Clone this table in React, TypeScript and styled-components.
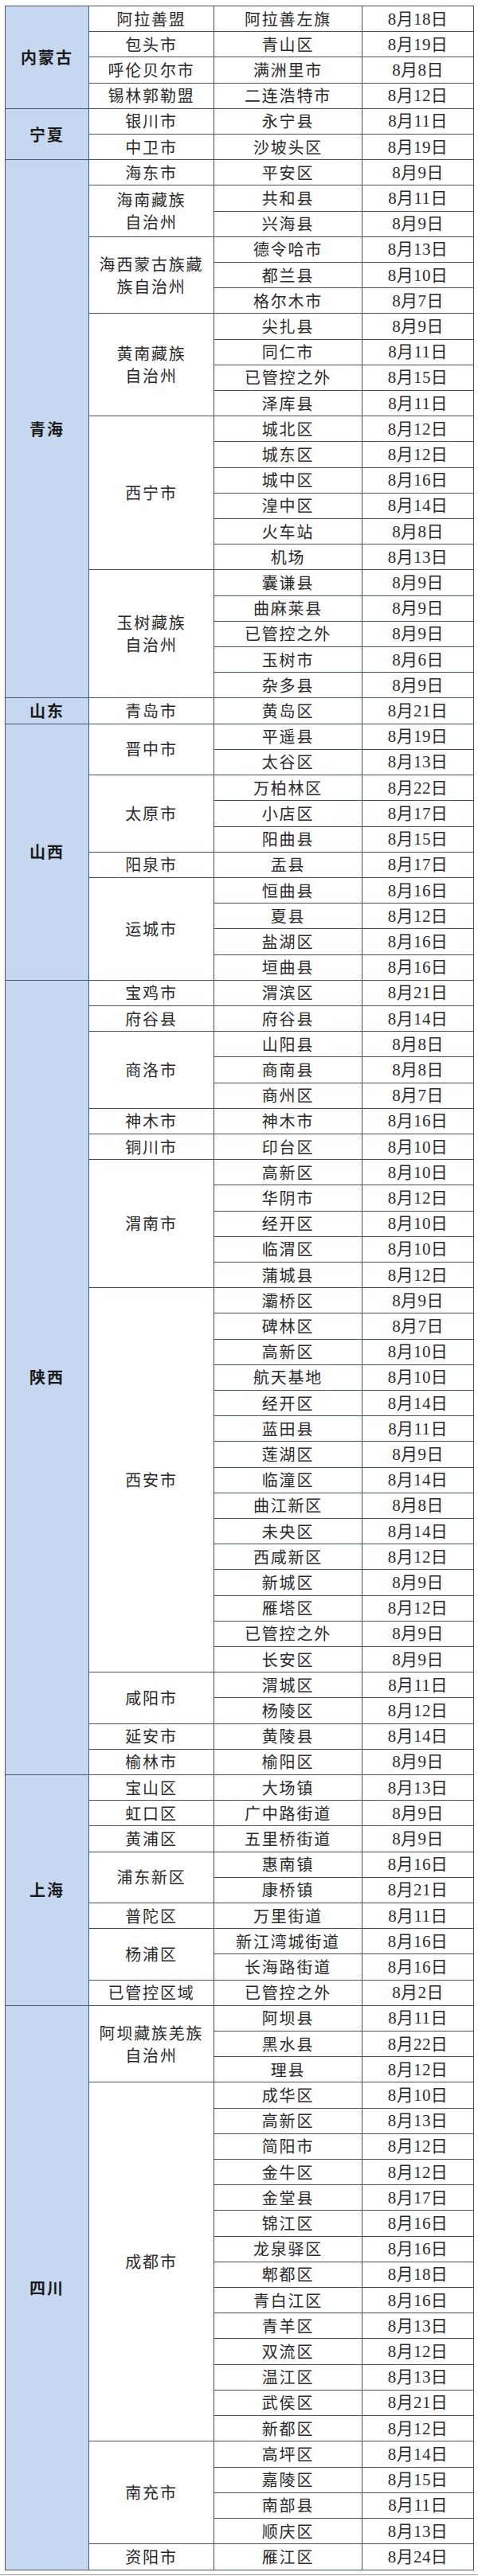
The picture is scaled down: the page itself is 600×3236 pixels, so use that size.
import React from 'react';
import styled, { createGlobalStyle } from 'styled-components';

const GlobalStyle = createGlobalStyle`
  html, body {
    margin: 0;
    padding: 0;
    background: #ffffff;
  }
`;

const Page = styled.div`
  width: 600px;
  padding: 7px 0 0 6px;
  box-sizing: border-box;
  font-family: "Liberation Serif", "Noto Sans CJK SC", serif;
  color: #222;
`;

const Table = styled.table`
  width: 588px;
  height: 3222px;
  border-collapse: collapse;
  table-layout: fixed;
  border: 1px solid #4a4f58;
`;

const Row = styled.tr`
  height: 32px;
`;

const Cell = styled.td`
  border: 1px solid #4a4f58;
  padding: 0;
  text-align: center;
  vertical-align: middle;
  font-size: 20px;
  line-height: 28px;
  font-weight: 400;
  white-space: pre-line;
`;

const ProvinceCell = styled(Cell)`
  background: #c5d8f0;
  border-color: #4d5a70;
  font-family: "Noto Sans CJK SC", sans-serif;
  font-weight: 700;
  letter-spacing: 2px;
  color: #1b1b1b;
`;

const CityCell = styled(Cell)`
  font-family: "Noto Sans CJK SC", sans-serif;
  letter-spacing: 1.8px;
  color: #2a2a2a;
`;

const DistrictCell = styled(Cell)`
  font-family: "Noto Sans CJK SC", sans-serif;
  letter-spacing: 1.8px;
  color: #2a2a2a;
`;

const DateCell = styled(Cell)`
  font-family: "Liberation Serif", "Noto Sans CJK SC", serif;
  font-size: 21px;
  letter-spacing: 0.4px;
  color: #2a2a2a;
`;

const BottomRule = styled.div`
  margin-top: 5px;
  margin-left: -6px;
  width: 600px;
  height: 1px;
  background: #9a9a9a;
`;

type City = { name: string; rows: [string, string][] };
type Province = { name: string; cities: City[] };

const data: Province[] = [
  {
    name: '内蒙古',
    cities: [
      { name: '阿拉善盟', rows: [['阿拉善左旗', '8月18日']] },
      { name: '包头市', rows: [['青山区', '8月19日']] },
      { name: '呼伦贝尔市', rows: [['满洲里市', '8月8日']] },
      { name: '锡林郭勒盟', rows: [['二连浩特市', '8月12日']] },
    ],
  },
  {
    name: '宁夏',
    cities: [
      { name: '银川市', rows: [['永宁县', '8月11日']] },
      { name: '中卫市', rows: [['沙坡头区', '8月19日']] },
    ],
  },
  {
    name: '青海',
    cities: [
      { name: '海东市', rows: [['平安区', '8月9日']] },
      { name: '海南藏族\n自治州', rows: [['共和县', '8月11日'], ['兴海县', '8月9日']] },
      {
        name: '海西蒙古族藏\n族自治州',
        rows: [['德令哈市', '8月13日'], ['都兰县', '8月10日'], ['格尔木市', '8月7日']],
      },
      {
        name: '黄南藏族\n自治州',
        rows: [['尖扎县', '8月9日'], ['同仁市', '8月11日'], ['已管控之外', '8月15日'], ['泽库县', '8月11日']],
      },
      {
        name: '西宁市',
        rows: [
          ['城北区', '8月12日'],
          ['城东区', '8月12日'],
          ['城中区', '8月16日'],
          ['湟中区', '8月14日'],
          ['火车站', '8月8日'],
          ['机场', '8月13日'],
        ],
      },
      {
        name: '玉树藏族\n自治州',
        rows: [
          ['囊谦县', '8月9日'],
          ['曲麻莱县', '8月9日'],
          ['已管控之外', '8月9日'],
          ['玉树市', '8月6日'],
          ['杂多县', '8月9日'],
        ],
      },
    ],
  },
  {
    name: '山东',
    cities: [{ name: '青岛市', rows: [['黄岛区', '8月21日']] }],
  },
  {
    name: '山西',
    cities: [
      { name: '晋中市', rows: [['平遥县', '8月19日'], ['太谷区', '8月13日']] },
      { name: '太原市', rows: [['万柏林区', '8月22日'], ['小店区', '8月17日'], ['阳曲县', '8月15日']] },
      { name: '阳泉市', rows: [['盂县', '8月17日']] },
      {
        name: '运城市',
        rows: [['恒曲县', '8月16日'], ['夏县', '8月12日'], ['盐湖区', '8月16日'], ['垣曲县', '8月16日']],
      },
    ],
  },
  {
    name: '陕西',
    cities: [
      { name: '宝鸡市', rows: [['渭滨区', '8月21日']] },
      { name: '府谷县', rows: [['府谷县', '8月14日']] },
      { name: '商洛市', rows: [['山阳县', '8月8日'], ['商南县', '8月8日'], ['商州区', '8月7日']] },
      { name: '神木市', rows: [['神木市', '8月16日']] },
      { name: '铜川市', rows: [['印台区', '8月10日']] },
      {
        name: '渭南市',
        rows: [
          ['高新区', '8月10日'],
          ['华阴市', '8月12日'],
          ['经开区', '8月10日'],
          ['临渭区', '8月10日'],
          ['蒲城县', '8月12日'],
        ],
      },
      {
        name: '西安市',
        rows: [
          ['灞桥区', '8月9日'],
          ['碑林区', '8月7日'],
          ['高新区', '8月10日'],
          ['航天基地', '8月10日'],
          ['经开区', '8月14日'],
          ['蓝田县', '8月11日'],
          ['莲湖区', '8月9日'],
          ['临潼区', '8月14日'],
          ['曲江新区', '8月8日'],
          ['未央区', '8月14日'],
          ['西咸新区', '8月12日'],
          ['新城区', '8月9日'],
          ['雁塔区', '8月12日'],
          ['已管控之外', '8月9日'],
          ['长安区', '8月9日'],
        ],
      },
      { name: '咸阳市', rows: [['渭城区', '8月11日'], ['杨陵区', '8月12日']] },
      { name: '延安市', rows: [['黄陵县', '8月14日']] },
      { name: '榆林市', rows: [['榆阳区', '8月9日']] },
    ],
  },
  {
    name: '上海',
    cities: [
      { name: '宝山区', rows: [['大场镇', '8月13日']] },
      { name: '虹口区', rows: [['广中路街道', '8月9日']] },
      { name: '黄浦区', rows: [['五里桥街道', '8月9日']] },
      { name: '浦东新区', rows: [['惠南镇', '8月16日'], ['康桥镇', '8月21日']] },
      { name: '普陀区', rows: [['万里街道', '8月11日']] },
      { name: '杨浦区', rows: [['新江湾城街道', '8月16日'], ['长海路街道', '8月16日']] },
      { name: '已管控区域', rows: [['已管控之外', '8月2日']] },
    ],
  },
  {
    name: '四川',
    cities: [
      {
        name: '阿坝藏族羌族\n自治州',
        rows: [['阿坝县', '8月11日'], ['黑水县', '8月22日'], ['理县', '8月12日']],
      },
      {
        name: '成都市',
        rows: [
          ['成华区', '8月10日'],
          ['高新区', '8月13日'],
          ['简阳市', '8月12日'],
          ['金牛区', '8月12日'],
          ['金堂县', '8月17日'],
          ['锦江区', '8月16日'],
          ['龙泉驿区', '8月16日'],
          ['郫都区', '8月18日'],
          ['青白江区', '8月16日'],
          ['青羊区', '8月13日'],
          ['双流区', '8月12日'],
          ['温江区', '8月13日'],
          ['武侯区', '8月21日'],
          ['新都区', '8月12日'],
        ],
      },
      {
        name: '南充市',
        rows: [['高坪区', '8月14日'], ['嘉陵区', '8月15日'], ['南部县', '8月11日'], ['顺庆区', '8月13日']],
      },
      { name: '资阳市', rows: [['雁江区', '8月24日']] },
    ],
  },
];

export default function App() {
  const rows: React.ReactNode[] = [];
  data.forEach((prov) => {
    const provSpan = prov.cities.reduce((n, c) => n + c.rows.length, 0);
    prov.cities.forEach((city, ci) => {
      city.rows.forEach(([district, date], ri) => {
        rows.push(
          <Row key={`${prov.name}-${ci}-${ri}`}>
            {ci === 0 && ri === 0 && <ProvinceCell rowSpan={provSpan}>{prov.name}</ProvinceCell>}
            {ri === 0 && <CityCell rowSpan={city.rows.length}>{city.name}</CityCell>}
            <DistrictCell>{district}</DistrictCell>
            <DateCell>{date}</DateCell>
          </Row>
        );
      });
    });
  });

  return (
    <>
      <GlobalStyle />
      <Page>
        <Table>
          <colgroup>
            <col style={{ width: 105 }} />
            <col style={{ width: 157 }} />
            <col style={{ width: 186 }} />
            <col style={{ width: 140 }} />
          </colgroup>
          <tbody>{rows}</tbody>
        </Table>
        <BottomRule />
      </Page>
    </>
  );
}
